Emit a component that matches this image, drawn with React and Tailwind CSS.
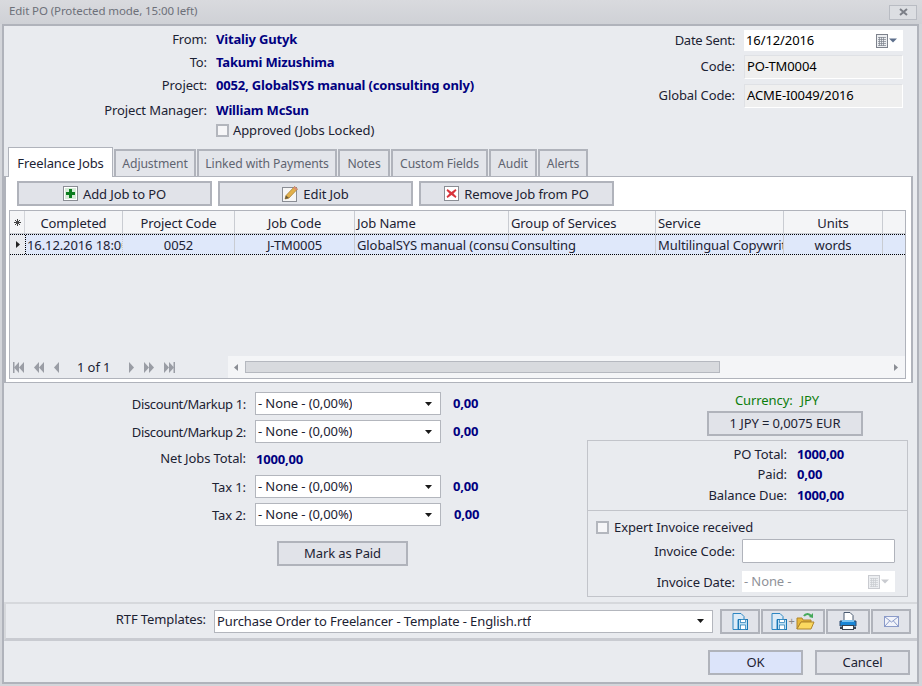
import React from 'react';

const btn = 'flex items-center justify-center gap-[5px] bg-[#e1e3e9] border-2 border-[#b0b3bb] text-[#1c2233]';
const value = 'font-bold text-[#000080] tracking-[-0.17px]';

function PlusIcon() {
  return (
    <svg width="15" height="15" viewBox="0 0 15 15">
      <rect x="0.5" y="0.5" width="14" height="14" fill="#fff" stroke="#8a8d94" />
      <rect x="2" y="2" width="11" height="11" fill="#d7ecd9" />
      <path d="M6 3h3v3h3v3H9v3H6V9H3V6h3z" fill="#0b7d1e" />
    </svg>
  );
}

function PencilIcon() {
  return (
    <svg width="16" height="17" viewBox="0 0 16 17">
      <rect x="0.5" y="2.5" width="14" height="14" fill="#f5f5f5" stroke="#8a8d94" />
      <path d="M3 14l1-3.5L12.5 1.5l3 2.5L7 13z" fill="#e2b04a" stroke="#a37a2c" strokeWidth="0.7" />
      <path d="M3 14l1-3.5L7 13z" fill="#6b5a3a" />
      <path d="M12.5 1.5l3 2.5-1.2 1.3-3-2.5z" fill="#d98880" />
    </svg>
  );
}

function RemoveIcon() {
  return (
    <svg width="15" height="15" viewBox="0 0 15 15">
      <rect x="0.5" y="0.5" width="14" height="14" fill="#fff" stroke="#8a8d94" />
      <path d="M3.5 3l4 3 4-3 1 1.5-3 3 3 3-1 1.5-4-3-4 3-1-1.5 3-3-3-3z" fill="#d8343c" />
    </svg>
  );
}

function CalendarIcon({ faded }) {
  const c = faded ? '#c9cbd0' : '#7d828c';
  return (
    <svg width="22" height="14" viewBox="0 0 22 14">
      <rect x="0.5" y="0.5" width="11" height="13" fill="#eceef1" stroke={c} />
      <path d="M2 3.5h8M2 5.5h8M2 7.5h8M2 9.5h8M2 11.5h8M3.5 3v9M5.5 3v9M7.5 3v9" stroke={c} strokeWidth="0.7" />
      <path d="M13 4.5h8l-4 4z" fill={faded ? '#c9cbd0' : '#5d6f8c'} />
    </svg>
  );
}

function Caret() {
  return (
    <svg width="7" height="4" viewBox="0 0 7 4">
      <path d="M0 0h7L3.5 4z" fill="#1a1a1a" />
    </svg>
  );
}

function DiskDoc() {
  return (
    <svg width="16" height="17" viewBox="0 0 16 17">
      <path d="M1 .5h8l3 3v3H6v10H1z" fill="#dcebf7" stroke="#2c86c2" />
      <rect x="6.5" y="6.5" width="9" height="10" fill="#bfe0f4" stroke="#1b78b6" />
      <rect x="8.5" y="6.5" width="5" height="3" fill="#fff" stroke="#1b78b6" strokeWidth="0.7" />
      <rect x="8.5" y="12" width="5" height="4.5" fill="#fff" stroke="#1b78b6" strokeWidth="0.7" />
    </svg>
  );
}

function FolderIcon() {
  return (
    <svg width="19" height="18" viewBox="0 0 19 18">
      <path d="M8 4a4 4 0 0 1 7 0" fill="none" stroke="#45a85a" strokeWidth="2" />
      <path d="M17 1v5l-4-1z" fill="#45a85a" />
      <path d="M1 17V6h5l1 2h8v2H5L1 17z" fill="#e8b93a" stroke="#b0852a" />
      <path d="M1 17l4-7h13l-3 7z" fill="#fbd960" stroke="#b0852a" />
    </svg>
  );
}

function PrinterIcon() {
  return (
    <svg width="18" height="18" viewBox="0 0 18 18">
      <path d="M5 .5h6l3 3v5H5z" fill="#fff" stroke="#4a5a70" />
      <path d="M1 9h16v5H1z" fill="#1a86d6" stroke="#2c4a70" />
      <rect x="3" y="8" width="12" height="2" fill="#7cc3f0" />
      <rect x="3.5" y="13.5" width="11" height="4" fill="#fff" stroke="#39424f" />
      <rect x="1" y="15" width="2.5" height="2" fill="#39424f" />
      <rect x="14.5" y="15" width="2.5" height="2" fill="#39424f" />
    </svg>
  );
}

function MailIcon() {
  return (
    <svg width="15" height="11" viewBox="0 0 15 11">
      <rect x="0.5" y="0.5" width="14" height="10" fill="#f1f3fa" stroke="#8b9bc9" />
      <path d="M1 1l6.5 5L14 1M1 10l4.5-5M14 10L9.5 5" fill="none" stroke="#8b9bc9" />
    </svg>
  );
}

function PagerArrow({ dir, bars, double }) {
  return (
    <svg width="12" height="11" viewBox="0 0 12 11" className={dir === 'right' ? '-scale-x-100' : ''}>
      {bars && <rect x="0" y="0" width="1.5" height="11" fill="#9a9da5" />}
      <path d="M6 0v11L1 5.5z" fill="#9a9da5" />
      {double && <path d="M11 0v11L6 5.5z" fill="#9a9da5" />}
    </svg>
  );
}

function Combo({ text, w = 'w-[186px]' }) {
  return (
    <div className={`${w} h-[23px] bg-white border border-[#b3b6bd] flex items-center justify-between pl-[2px] pr-[8px] text-[#1c2233]`}>
      <span className="truncate pt-[1px]">{text}</span>
      <Caret />
    </div>
  );
}

function DiscountRow({ label, val, labelClass = '', valClass = 'ml-[12px]' }) {
  return (
    <div className="flex items-center h-[23px]">
      <span className={`w-[242px] pt-[2px] text-right text-[#1c2233] ${labelClass}`}>{label}</span>
      <span className="ml-[9px]"><Combo text="- None - (0,00%)" /></span>
      <span className={`${value} ${valClass}`}>{val}</span>
    </div>
  );
}

function Field({ label, children, h, mt }) {
  return (
    <div className={`flex items-center ${h} ${mt}`}>
      <span className="w-[147px] mr-[7px] pt-[2px] text-right text-[#1c2233]">{label}</span>
      {children}
    </div>
  );
}

const tabs = [
  ['Adjustment', 'w-[82px]'],
  ['Linked with Payments', 'w-[140px]'],
  ['Notes', 'w-[52px]'],
  ['Custom Fields', 'w-[97px]'],
  ['Audit', 'w-[48px]'],
  ['Alerts', 'w-[50px]'],
];

const cols = [
  ['Completed', 'w-[98px]', 'text-center', '16.12.2016 18:00'],
  ['Project Code', 'w-[112px]', 'text-center', '0052'],
  ['Job Code', 'w-[120px]', 'text-center', 'J-TM0005'],
  ['Job Name', 'w-[154px]', 'text-left', 'GlobalSYS manual (consulting only)'],
  ['Group of Services', 'w-[147px]', 'text-left', 'Consulting'],
  ['Service', 'w-[128px]', 'text-left', 'Multilingual Copywriting'],
  ['Units', 'w-[99px]', 'text-center', 'words'],
];

export default function App() {
  return (
    <div className="w-[922px] h-[686px] overflow-hidden flex flex-col bg-[#d3d5da] text-[13px] font-['Noto_Sans',sans-serif] tracking-[-0.1px]">
      {/* title bar */}
      <div className="h-[24px] shrink-0 flex items-center justify-between pl-[9px] pr-[5px] bg-gradient-to-b from-[#d9dade] to-[#cfd1d6] text-[#6d7079]">
        <span className="text-[11.5px] -mt-[2px]">Edit PO (Protected mode, 15:00 left)</span>
        <div className="w-[28px] h-[15px] bg-[#dcdee2] border border-[#b9bcc3] flex items-center justify-center">
          <svg width="9" height="8" viewBox="0 0 9 8"><path d="M1 1l7 6M8 1L1 7" stroke="#7c7f87" strokeWidth="2" /></svg>
        </div>
      </div>

      <div className="ml-[2px] mr-[3px] h-[660px] bg-[#e9ebef] border-2 border-[#b0b3bb] flex flex-col">
        {/* header */}
        <div className="h-[121px] shrink-0 flex justify-between">
          <div className="pt-[2px] pl-[3px]">
            {[['From:', 'Vitaliy Gutyk'], ['To:', 'Takumi Mizushima'], ['Project:', '0052, GlobalSYS manual (consulting only)']].map(([l, v]) => (
              <div key={l} className="flex items-center h-[23px]">
                <span className="w-[200px] text-right text-[#1c2233]">{l}</span>
                <span className={`ml-[9px] ${value}`}>{v}</span>
              </div>
            ))}
            <div className="flex items-center h-[23px] mt-[2px]">
              <span className="w-[200px] text-right text-[#1c2233]">Project Manager:</span>
              <span className={`ml-[9px] ${value}`}>William McSun</span>
            </div>
            <div className="flex items-center h-[17px] ml-[209px] gap-[4px] text-[#1c2233]">
              <span className="w-[13px] h-[13px] bg-[#f6f6f8] border-2 border-[#b3b6bd]" />
              <span>Approved (Jobs Locked)</span>
            </div>
          </div>
          <div className="pt-[4px] pr-[14px] flex flex-col">
            <div className="flex items-center justify-end h-[21px]">
              <span className="text-[#1c2233] mr-[9px] tracking-[-0.25px]">Date Sent:</span>
              <div className="w-[159px] h-[21px] bg-white flex items-center justify-between pl-[2px] pr-[5px]">
                <span className="pt-[1px]">16/12/2016</span>
                <CalendarIcon />
              </div>
            </div>
            <div className="flex items-center justify-end h-[24px] mt-[4px]">
              <span className="text-[#1c2233] mr-[9px]">Code:</span>
              <div className="w-[159px] h-[24px] bg-[#efefef] border border-[#dfe1e5] border-b-white border-r-white flex items-center pl-[2px]">PO-TM0004</div>
            </div>
            <div className="flex items-center justify-end h-[24px] mt-[5px]">
              <span className="text-[#1c2233] mr-[9px]">Global Code:</span>
              <div className="w-[159px] h-[24px] bg-[#efefef] border border-[#dfe1e5] border-b-white border-r-white flex items-center pl-[2px]">ACME-I0049/2016</div>
            </div>
          </div>
        </div>

        {/* tabs */}
        <div className="h-[29px] shrink-0 flex items-end pl-[4px] relative z-10">
          <div className="w-[105px] h-[30px] -mb-px pt-[2px] bg-white border border-[#b0b3bb] border-b-0 flex items-center justify-center text-[#1c2233]">Freelance Jobs</div>
          {tabs.map(([t, w]) => (
            <div key={t} className={`${w} h-[27px] ml-[1px] first:ml-0 pt-[1px] bg-[#e3e5ea] border-2 border-b-0 border-[#b0b3bb] flex items-center justify-center text-[12.2px] text-[#5f6470]`}>{t}</div>
          ))}
        </div>

        {/* tab panel */}
        <div className="h-[207px] shrink-0 w-[909px] bg-white border border-[#b0b3bb] border-l-2 border-r-2 pt-[4px] px-[3px] flex flex-col">
          <div className="h-[25px] flex gap-[6px] pl-[8px] shrink-0">
            <div className={`${btn} w-[195px]`}><PlusIcon /><span className="pt-[2px]">Add Job to PO</span></div>
            <div className={`${btn} w-[195px]`}><PencilIcon /><span className="pt-[2px]">Edit Job</span></div>
            <div className={`${btn} w-[195px]`}><RemoveIcon /><span className="pt-[2px]">Remove Job from PO</span></div>
          </div>
          <div className="mt-[4px] w-[897px] h-[169px] border border-[#b0b3bb] bg-[#e9ebef] flex flex-col">
            <div className="h-[23px] flex bg-[#f4f5f7] border-b border-[#c9ccd2] shrink-0">
              <div className="w-[15px] border-r border-[#d3d5da] flex items-center justify-center">
                <svg width="7" height="7" viewBox="0 0 7 7"><path d="M3.5 0v7M0 3.5h7M1 1l5 5M6 1L1 6" stroke="#444" strokeWidth="1" /></svg>
              </div>
              {cols.map(([h, w, a]) => (
                <div key={h} className={`${w} h-full leading-[24px] border-r border-[#c9ccd2] px-[2px] truncate text-[#1c2233] ${a}`}>{h}</div>
              ))}
              <div className="flex-1" />
            </div>
            <div className="h-[21px] flex bg-[#dfe8fa] border-y border-dotted border-black shrink-0">
              <div className="w-[15px] bg-[#e9ebef] flex items-center justify-center">
                <svg width="4" height="7" viewBox="0 0 4 7"><path d="M0 0l4 3.5L0 7z" fill="#222" /></svg>
              </div>
              {cols.map(([h, w, a, v], i) => (
                <div key={h} className={`${w} h-full leading-[21px] border-r border-[#c9ccd2] overflow-hidden whitespace-nowrap text-[#1c2233] ${i === 0 ? 'border-l border-l-black border-dotted text-left pl-[1px]' : `px-[2px] ${a}`}`}>{v}</div>
              ))}
              <div className="flex-1" />
            </div>
            <div className="flex-1" />
            <div className="h-[22px] flex shrink-0">
              <div className="w-[218px] flex items-center pl-[3px] gap-[8px]">
                <PagerArrow bars double />
                <PagerArrow double />
                <PagerArrow />
                <span className="text-[#1c2233] ml-[4px] mr-[5px] pt-[1px]">1 of 1</span>
                <PagerArrow dir="right" />
                <PagerArrow dir="right" double />
                <PagerArrow dir="right" bars double />
              </div>
              <div className="flex-1 bg-[#f4f5f7] flex items-center pl-[6px] pr-[7px]">
                <svg width="4" height="7" viewBox="0 0 4 7"><path d="M4 0L0 3.5 4 7z" fill="#8a8d94" /></svg>
                <div className="ml-[7px] w-[475px] h-[12px] bg-[#d8dade] border border-[#b5b8bf]" />
                <div className="flex-1" />
                <svg width="4" height="7" viewBox="0 0 4 7"><path d="M0 0l4 3.5L0 7z" fill="#8a8d94" /></svg>
              </div>
            </div>
          </div>
        </div>

        {/* totals */}
        <div className="h-[219px] shrink-0 flex">
          <div className="w-[583px] pt-[9px]">
            <DiscountRow label="Discount/Markup 1:" val="0,00" labelClass="tracking-[-0.35px]" />
            <div className="mt-[5px]"><DiscountRow label="Discount/Markup 2:" val="0,00" labelClass="tracking-[-0.35px]" /></div>
            <div className="flex items-center h-[22px] mt-[5px]">
              <span className="w-[242px] text-right text-[#1c2233]">Net Jobs Total:</span>
              <span className={`ml-[10px] pt-[1px] ${value}`}>1000,00</span>
            </div>
            <div className="mt-[5px]"><DiscountRow label="Tax 1:" val="0,00" /></div>
            <div className="mt-[5px]"><DiscountRow label="Tax 2:" val="0,00" valClass="ml-[13px]" /></div>
            <div className={`${btn} w-[131px] h-[25px] ml-[273px] mt-[15px]`}>Mark as Paid</div>
          </div>
          <div className="flex-1 flex flex-col items-start pt-[8px]">
            <div className="h-[20px] ml-[148px] text-[#0c7d0c] flex items-center gap-[8px]">
              <span>Currency:</span><span>JPY</span>
            </div>
            <div className={`${btn} w-[156px] h-[25px] ml-[120px]`}>1 JPY = 0,0075 EUR</div>
            <div className="mt-[4px] w-[321px] h-[157px] border border-[#c2c4ca] flex flex-col">
              <div className="h-[70px] border-b border-[#c2c4ca] pt-[3px] shrink-0">
                {[['PO Total:', '1000,00'], ['Paid:', '0,00'], ['Balance Due:', '1000,00']].map(([l, v]) => (
                  <div key={l} className="flex items-center h-[20.5px]">
                    <span className="w-[199px] text-right text-[#1c2233]">{l}</span>
                    <span className={`ml-[10px] ${value}`}>{v}</span>
                  </div>
                ))}
              </div>
              <div className="flex items-center gap-[5px] pl-[8px] h-[20px] mt-[6px] text-[#1c2233]">
                <span className="w-[13px] h-[13px] bg-[#f6f6f8] border-2 border-[#b3b6bd]" />
                <span className="pt-[2px]">Expert Invoice received</span>
              </div>
              <Field label="Invoice Code:" h="h-[24px]" mt="mt-[2px]">
                <div className="w-[153px] h-[24px] bg-white border border-[#b0b3bb] rounded-[1px]" />
              </Field>
              <Field label="Invoice Date:" h="h-[21px]" mt="mt-[8px]">
                <div className="w-[153px] h-[21px] bg-white flex items-center justify-between pl-[2px] pr-[5px] text-[#8f9299]">
                  <span className="pt-[1px]">- None -</span>
                  <CalendarIcon faded />
                </div>
              </Field>
            </div>
          </div>
        </div>

        {/* rtf templates */}
        <div className="h-[39px] shrink-0 border-t-2 border-[#d6d8dc] border-b-[3px] border-b-[#c9cbd1] border-l-2 border-l-[#d6d8dc] flex items-center">
          <span className="w-[200px] text-right text-[#1c2233] -mt-[3px]">RTF Templates:</span>
          <div className="ml-[8px]"><Combo text="Purchase Order to Freelancer - Template - English.rtf" w="w-[499px]" /></div>
          <div className={`${btn} ml-[7px] w-[40px] h-[25px]`}><DiskDoc /></div>
          <div className={`${btn} ml-[1px] w-[64px] h-[25px] !gap-[1px]`}>
            <DiskDoc /><span className="text-[#888] text-[11px]">+</span><FolderIcon />
          </div>
          <div className={`${btn} ml-[1px] w-[44px] h-[25px]`}><PrinterIcon /></div>
          <div className={`${btn} ml-[1px] w-[40px] h-[25px]`}><MailIcon /></div>
        </div>

        {/* dialog buttons */}
        <div className="flex-1 flex justify-end items-start gap-[12px] pt-[9px] pr-[7px]">
          <div className="w-[95px] h-[25px] bg-[#dce4fa] border-2 border-[#b0b3bb] flex items-center justify-center text-[#1c2233]">OK</div>
          <div className={`${btn} w-[95px] h-[25px]`}>Cancel</div>
        </div>
      </div>
    </div>
  );
}
